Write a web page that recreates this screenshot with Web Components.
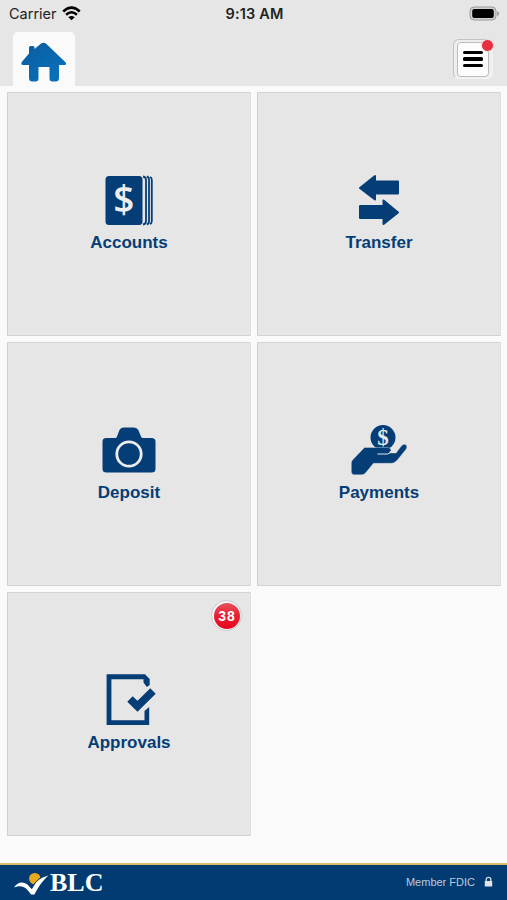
<!DOCTYPE html>
<html lang="en">
<head>
<meta charset="utf-8">
<meta name="viewport" content="width=device-width, initial-scale=1">
<title>BLC Mobile</title>
<style>
    body {
        margin: 0;
        background-color: #fafafa;
        font-family: "Liberation Sans", Arial, sans-serif;
    }
</style>
</head>
<body>
<bank-app></bank-app>
<script>
// icons share one 100 x 66 canvas, centred above the label
const icons = {
    accounts: `
        <rect x="25.5" y="11" width="37" height="49" rx="3.5"/>
        <path d="M63 11.5Q66 12 66 15V56Q66 59 63 59.5M66.8 11.5Q69 12 69 15V56Q69 59 66.8 59.5M70 12Q71.8 12.5 71.8 15V56Q71.8 58.5 70 59" fill="none" stroke="currentColor" stroke-width="1.8"/>
        <text x="43.8" y="48" text-anchor="middle" font-family="Open Sans" font-size="37" font-weight="600" fill="#eee">$</text>`,
    transfer: `
        <g stroke="currentColor" stroke-width="2" stroke-linejoin="round">
            <path d="M30 23L45 11V16.5H68V28.5H45V34.5Z"/>
            <path d="M68 47.5L53.5 35.5V41H30V53H53.5V59Z"/>
        </g>`,
    deposit: `
        <path d="M26 23H35Q36.5 23 37 21.5L39.5 15Q40.5 12.5 43.5 12.5H54Q57 12.5 58.3 15L61 21.5Q61.5 23 63 23H71.5Q75.5 23 75.5 26.5V54Q75.5 57.5 71.5 57.5H26.5Q22.5 57.5 22.5 54V26.5Q22.5 23 26 23Z"/>
        <circle cx="49" cy="39" r="12.2" fill="none" stroke="#eee" stroke-width="2.8"/>`,
    payments: `
        <circle cx="53" cy="22.5" r="12.5"/>
        <text x="53" y="29.8" text-anchor="middle" font-family="Liberation Serif" font-size="23" font-weight="700" fill="#e8e8e8">$</text>
        <path d="M34.5 32.5H58Q61 32.8 61 35.5Q61 37 59.5 38H66L71.3 31Q73.8 28 76.3 30.1Q77.6 31.7 76.3 34L67 45.5Q64.5 48.3 61 48.3H43.5L35.5 58Q34 59.8 32 59.8H24Q21.3 59.5 21.3 56.5V48Q21.3 46.5 22.5 45Z" stroke="#e6e6e6" stroke-width=".4"/>
        <path d="M47.5 39H57.5Q60.5 38.7 60.5 36" fill="none" stroke="#e6e6e6" stroke-width="1"/>`,
    approvals: `
        <path d="M69 20.5L66.8 22L63.5 17.5V14.2H31.4V55.3H64.5V46L69.2 42V60H26.6V9.3H65L69.7 14V20Z"/>
        <path d="M50 34L57.5 41.3L73 26" fill="none" stroke="currentColor" stroke-width="7.8"/>`
}

class StatusBar extends HTMLElement {
    constructor() {
        super()
        this.attachShadow({ mode: 'open' })
        this.shadowRoot.innerHTML = `
            <style>
                :host {
                    display: grid;
                    grid-template-columns: 1fr auto 1fr;
                    align-items: center;
                    height: 27px;
                    padding: 0 7px 0 9px;
                    box-sizing: border-box;
                    font-family: Inter, sans-serif;
                    font-size: 14.5px;
                    color: #222;
                }
                .carrier {
                    display: flex;
                    align-items: center;
                    gap: 5px;
                }
                .time {
                    font-weight: 600;
                    letter-spacing: .15px;
                }
                .battery {
                    justify-self: end;
                }
                svg {
                    display: block;
                }
            </style>
            <div class="carrier">
                <span>Carrier</span>
                <svg width="19" height="15" viewBox="0 0 19 15" fill="none" stroke="#000" stroke-width="2.5">
                    <path d="M1.2 5.5Q9.5 -2.2 17.8 5.5M4.1 8.7Q9.5 3.9 14.9 8.7"/>
                    <path d="M6.3 11.2Q9.5 8.6 12.7 11.2L9.5 14.3Z" fill="#000" stroke="none"/>
                </svg>
            </div>
            <div class="time">9:13 AM</div>
            <svg class="battery" width="31" height="15" viewBox="0 0 31 15">
                <rect x="1" y="1" width="26" height="13" rx="4" fill="#d2d2d2" stroke="#999"/>
                <rect x="3.2" y="3" width="21.6" height="9" rx="2" fill="#000"/>
                <path d="M28.3 4.7Q32 7.5 28.3 10.3Z" fill="#999"/>
            </svg>
        `
    }
}

class MenuButton extends HTMLElement {
    constructor() {
        super()
        this.attachShadow({ mode: 'open' })
        this.shadowRoot.innerHTML = `
            <style>
                :host {
                    display: flex;
                    align-items: center;
                    justify-content: center;
                    position: relative;
                    width: 40px;
                    height: 40px;
                    box-sizing: border-box;
                    border-radius: 6px;
                    border: 1px solid #f4f4f4;
                    border-top-color: #c2c2c2;
                    border-left-color: #c2c2c2;
                    background-color: #eee;
                }
                .face {
                    display: flex;
                    flex-direction: column;
                    align-items: center;
                    justify-content: center;
                    gap: 3px;
                    width: 32px;
                    height: 35px;
                    box-sizing: border-box;
                    border: 1px solid #bdbdbd;
                    border-radius: 4px;
                    background-color: #fcfcfc;
                }
                i {
                    width: 20px;
                    height: 3.4px;
                    border-radius: 1.5px;
                    background-color: #000;
                }
                .dot {
                    position: absolute;
                    top: -1px;
                    right: -2px;
                    width: 11px;
                    height: 11px;
                    border: 1px solid #f5e3e4;
                    border-radius: 50%;
                    background-color: #e6303f;
                }
            </style>
            <div class="face"><i></i><i></i><i></i></div>
            <span class="dot"></span>
        `
    }
}

class AppHeader extends HTMLElement {
    constructor() {
        super()
        this.attachShadow({ mode: 'open' })
        this.shadowRoot.innerHTML = `
            <style>
                :host {
                    display: block;
                    height: 86px;
                    background-color: #e6e6e6;
                }
                .bar {
                    display: flex;
                    justify-content: space-between;
                    padding: 5px 14px 0 13px;
                }
                .home {
                    width: 62px;
                    height: 54px;
                    border-radius: 5px 5px 0 0;
                    background-color: #fafafa;
                }
                menu-button {
                    margin-top: 7px;
                }
                svg {
                    display: block;
                }
            </style>
            <status-bar></status-bar>
            <div class="bar">
                <div class="home">
                    <svg width="62" height="54" viewBox="13 32 62 54">
                        <defs>
                            <linearGradient id="blue" x1="0" y1="0" x2="1" y2="1">
                                <stop offset="0" stop-color="#0b5b9e"/>
                                <stop offset="1" stop-color="#0874bd"/>
                            </linearGradient>
                        </defs>
                        <path d="M29 53.5V47.5Q29 46 30.5 46H33Q34.5 46 34.5 47.5V49L40.8 43.7Q43.5 41.7 46.2 43.7L65.7 62.5Q66.8 65 64.5 65H59V78Q59 81.5 55.5 81.5H52.5Q49.5 81.5 49.5 78.5V67H38.5V78.5Q38.5 81.5 35.5 81.5H32.5Q29 81.5 29 78V65H22.8Q20.5 64.5 21.8 62Z" fill="url(#blue)"/>
                    </svg>
                </div>
                <menu-button></menu-button>
            </div>
        `
    }
}

class MenuTile extends HTMLElement {
    constructor() {
        super()
        this.attachShadow({ mode: 'open' })
        this.shadowRoot.innerHTML = `
            <style>
                :host {
                    display: flex;
                    flex-direction: column;
                    align-items: center;
                    position: relative;
                    padding-top: 72px;
                    box-sizing: border-box;
                    border: 1px solid #e0e0e0;
                    border-top-color: #d4d4d4;
                    border-left-color: #cfcfcf;
                    border-bottom-color: #d2d2d2;
                    border-radius: 1px;
                    background-color: #e6e6e6;
                    color: #053d76;
                }
                svg {
                    display: block;
                    fill: currentColor;
                }
                .label {
                    margin-top: 2px;
                    font-size: 17px;
                    line-height: 20px;
                    font-weight: bold;
                }
                ::slotted(count-badge) {
                    position: absolute;
                    top: 7px;
                    right: 8px;
                }
            </style>
            <svg width="100" height="66" viewBox="-1 0 100 66">${icons[this.getAttribute('icon')]}</svg>
            <div class="label"><slot></slot></div>
            <slot name="badge"></slot>
        `
    }
}

class CountBadge extends HTMLElement {
    constructor() {
        super()
        this.attachShadow({ mode: 'open' })
        this.shadowRoot.innerHTML = `
            <style>
                :host {
                    display: flex;
                    align-items: center;
                    justify-content: center;
                    width: 31px;
                    height: 31px;
                    box-sizing: border-box;
                    border: 1.5px solid #cbcbcb;
                    border-radius: 50%;
                    background-color: #f7f5f5;
                    color: #fff;
                    font-size: 14px;
                    font-weight: bold;
                    letter-spacing: .8px;
                }
                .fill {
                    width: 26px;
                    height: 26px;
                    border-radius: 50%;
                    background: linear-gradient(#e4535d, #e81e31 50%, #e6071f);
                    line-height: 26px;
                    text-align: center;
                    text-indent: .8px;
                }
            </style>
            <div class="fill"><slot></slot></div>
        `
    }
}

class AppFooter extends HTMLElement {
    constructor() {
        super()
        this.attachShadow({ mode: 'open' })
        this.shadowRoot.innerHTML = `
            <style>
                :host {
                    display: flex;
                    align-items: center;
                    justify-content: space-between;
                    height: 37px;
                    padding: 0 14px;
                    box-sizing: border-box;
                    border-top: 2px solid #d9bf68;
                    background-color: #023b72;
                }
                .logo {
                    display: flex;
                    align-items: center;
                    gap: 1px;
                    font-family: "Liberation Serif", serif;
                    font-size: 26px;
                    font-weight: bold;
                    line-height: 35px;
                    color: #fff;
                }
                .member {
                    display: flex;
                    align-items: center;
                    gap: 9px;
                    margin-top: -2px;
                    font-size: 11px;
                    color: #bccbdd;
                }
                svg {
                    display: block;
                }
            </style>
            <div class="logo">
                <svg width="35" height="26" viewBox="14 868 35 26">
                    <circle cx="34.8" cy="876.6" r="5.7" fill="#eba91c"/>
                    <path d="M14 885.5C18 879 24 879.5 28 883L32 887C35 881 40 875.5 48.5 873.5C43 878 38 885.5 34.5 892.5H31C27.5 887 23 881.5 14 885.5Z" fill="#fff"/>
                    <path d="M27 880.5L31.5 886.5C34 881.5 38 877 42 875" fill="none" stroke="#023b72"/>
                </svg>
                <span>BLC</span>
            </div>
            <div class="member">
                <span>Member FDIC</span>
                <svg width="9" height="12" viewBox="0 0 9 12">
                    <path d="M2.2 6V3.5Q2.2 1.4 4.5 1.4Q6.8 1.4 6.8 3.5V6" fill="none" stroke="#d5dce5" stroke-width="1.3"/>
                    <rect x=".8" y="5" width="7.4" height="5.5" rx=".6" fill="#e0e5eb"/>
                </svg>
            </div>
        `
    }
}

class BankApp extends HTMLElement {
    constructor() {
        super()
        this.attachShadow({ mode: 'open' })
        this.shadowRoot.innerHTML = `
            <style>
                :host {
                    display: flex;
                    flex-direction: column;
                    height: 100vh;
                    overflow: hidden;
                }
                main {
                    flex: 1;
                    display: grid;
                    grid-template-columns: 244px 244px;
                    grid-auto-rows: 244px;
                    gap: 6px;
                    padding: 6px 6px 0 7px;
                }
            </style>
            <app-header></app-header>
            <main>
                <menu-tile icon="accounts">Accounts</menu-tile>
                <menu-tile icon="transfer">Transfer</menu-tile>
                <menu-tile icon="deposit">Deposit</menu-tile>
                <menu-tile icon="payments">Payments</menu-tile>
                <menu-tile icon="approvals">Approvals<count-badge slot="badge">38</count-badge></menu-tile>
            </main>
            <app-footer></app-footer>
        `
    }
}

customElements.define('status-bar', StatusBar)
customElements.define('menu-button', MenuButton)
customElements.define('app-header', AppHeader)
customElements.define('count-badge', CountBadge)
customElements.define('menu-tile', MenuTile)
customElements.define('app-footer', AppFooter)
customElements.define('bank-app', BankApp)
</script>
</body>
</html>
